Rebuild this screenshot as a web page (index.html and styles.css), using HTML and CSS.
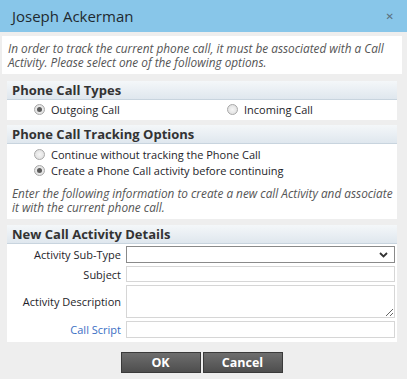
FILE: index.html
```html
<!DOCTYPE html>
<html>
<head>
<meta charset="utf-8">
<link rel="stylesheet" href="styles.css">
</head>
<body>
<div class="titlebar">
  <span class="title">Joseph Ackerman</span>
  <span class="close">&#x2715;</span>
</div>
<div class="intro">In order to track the current phone call, it must be associated with a Call Activity. Please select one of the following options.</div>

<div class="section first">
  <div class="sec-head">Phone Call Types</div>
  <div class="sec-body types">
    <label class="opt"><input type="radio" name="t" checked> Outgoing Call</label>
    <label class="opt"><input type="radio" name="t"> Incoming Call</label>
  </div>
</div>

<div class="section">
  <div class="sec-head">Phone Call Tracking Options</div>
  <div class="sec-body track">
    <label class="opt"><input type="radio" name="k"> Continue without tracking the Phone Call</label>
    <label class="opt"><input type="radio" name="k" checked> Create a Phone Call activity before continuing</label>
    <div class="note">Enter the following information to create a new call Activity and associate it with the current phone call.</div>
  </div>
</div>

<div class="section">
  <div class="sec-head">New Call Activity Details</div>
  <div class="sec-body form">
    <label class="lbl">Activity Sub-Type</label>
    <div class="select"><svg width="9" height="6" viewBox="0 0 9 6"><path d="M1 1 L4.5 4.5 L8 1" fill="none" stroke="#333" stroke-width="1.8"/></svg></div>
    <label class="lbl">Subject</label>
    <input class="field" type="text">
    <label class="lbl">Activity Description</label>
    <textarea class="field area"></textarea>
    <label class="lbl link">Call Script</label>
    <input class="field script" type="text">
  </div>
</div>

<div class="buttons">
  <button class="btn">OK</button>
  <button class="btn">Cancel</button>
</div>
</body>
</html>
```
FILE: styles.css
```css
* { box-sizing: border-box; }
body {
  margin: 0;
  background: #eeeeee;
  font-family: "Open Sans", "DejaVu Sans", sans-serif;
  color: #222;
  width: 407px;
  height: 379px;
  overflow: hidden;
}
.titlebar {
  height: 32px;
  background: #88c6e9;
  display: flex;
  align-items: center;
  justify-content: space-between;
  padding: 0 12px 1px 12px;
}
.title { font-size: 15px; color: #1f2a30; }
.close { font-size: 10px; color: #5a6e7c; font-weight: bold; margin-right: 1px; }
.intro {
  margin: 4px 5px 0 2px;
  background: #fff;
  padding: 5px 6px;
  font-style: italic;
  font-size: 11.8px;
  line-height: 14px;
  color: #555;
}
.section {
  margin: 6px 10px 0 7px;
  background: #fff;
}
.section.first { margin-top: 7px; }
.section.first + .section { margin-top: 5px; }
.sec-head {
  height: 19px;
  background: linear-gradient(#f4f7f9, #dfe7ee);
  border-bottom: 1px solid #c8d4de;
  font-weight: bold;
  font-size: 13px;
  line-height: 18px;
  padding-left: 5px;
  color: #333;
}
.opt {
  display: flex;
  align-items: center;
  font-size: 11px;
  color: #1e1e2a;
  height: 16px;
}
.opt input {
  appearance: none;
  -webkit-appearance: none;
  width: 11px;
  height: 11px;
  margin: 0 6px 0 0;
  border: 1px solid #a8a8a8;
  border-radius: 50%;
  background: radial-gradient(#f6f6f6, #dadada);
  position: relative;
  flex: none;
}
.opt input:checked::after {
  content: "";
  position: absolute;
  left: 2px; top: 2px;
  width: 5px; height: 5px;
  border-radius: 50%;
  background: #5a5a5a;
}
.types {
  display: grid;
  grid-template-columns: 193px 1fr;
  padding: 1px 0 3px 27px;
}
.track { padding: 2px 0 5px 0; }
.track .opt { padding-left: 27px; }
.note {
  margin-top: 8px;
  padding-left: 5px;
  font-style: italic;
  font-size: 11.8px;
  line-height: 14px;
  color: #555;
}
.form {
  display: grid;
  grid-template-columns: 114px 1fr;
  column-gap: 5px;
  row-gap: 3px;
  padding: 2px 2px 4px 0;
  align-items: center;
}
.lbl { font-size: 11px; text-align: right; color: #1e1e2a; }
.lbl.link { color: #3a6fc4; }
.select {
  height: 17px;
  border: 1px solid #8a8a8a;
  display: flex;
  align-items: center;
  justify-content: flex-end;
  padding-right: 6px;
}
.field {
  height: 16px;
  border: 1px solid #d6d6d6;
  margin: 0;
  padding: 0;
  font: inherit;
  display: block;
}
.area { height: 33px; resize: vertical; }
.script { height: 17px; }
.buttons {
  display: flex;
  justify-content: center;
  gap: 2px;
  margin-top: 10px;
  padding-right: 4px;
}
.btn {
  width: 80px;
  height: 21px;
  border: 1px solid #3a3a3a;
  background: linear-gradient(#6e6e6e, #4e4e4e);
  color: #fff;
  font-family: "Open Sans", sans-serif;
  font-weight: bold;
  font-size: 12.5px;
  padding: 0;
}
```
